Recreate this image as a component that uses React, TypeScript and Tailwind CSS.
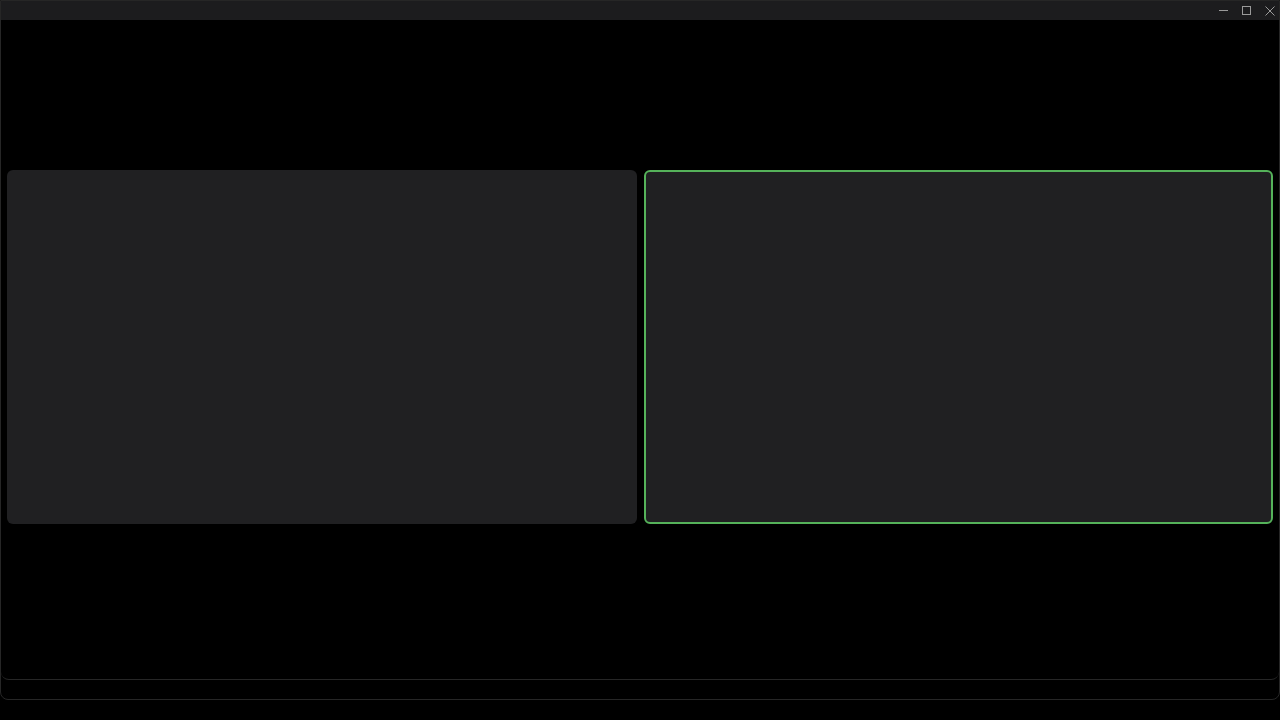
import React from "react";

export default function App() {
  return (
    <div className="w-[1280px] h-[720px] bg-black overflow-hidden" style={{ fontFamily: "'Liberation Sans', sans-serif" }}>
      <div className="w-[1280px] h-[700px] flex flex-col bg-black border border-[#262626] rounded-b-[8px] overflow-hidden">
        <div className="h-[19px] shrink-0 bg-[#1c1c1e] flex items-center justify-end">
          <div className="flex items-center gap-[14px] pr-[4px]">
            <div className="w-[9px] h-px bg-[#9a9a9a]" />
            <div className="w-[9px] h-[9px] border border-[#9a9a9a]" />
            <svg width="10" height="10" viewBox="0 0 10 10" stroke="#9a9a9a" strokeWidth="1">
              <path d="M0.5 0.5 L9.5 9.5 M9.5 0.5 L0.5 9.5" />
            </svg>
          </div>
        </div>
        <div className="flex-1 flex items-center gap-[7px] pl-[6px] pr-[6px] pb-[6px] border-b border-[#262626] rounded-b-[8px]">
          <div className="w-[630px] shrink-0 h-[354px] bg-[#202022] rounded-[6px]" />
          <div className="w-[629px] shrink-0 h-[354px] bg-[#202022] rounded-[6px] border-2 border-[#55b25a]" />
        </div>
        <div className="h-[19px] shrink-0" />
      </div>
    </div>
  );
}
